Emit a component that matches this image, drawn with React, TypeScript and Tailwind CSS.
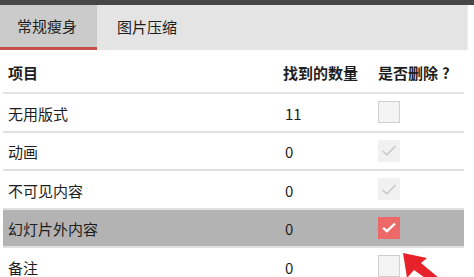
import React from "react";

const font = { fontFamily: '"Noto Sans CJK SC", "Noto Sans", sans-serif' };

function Box({ kind }: { kind: "empty" | "disabled" | "checked" }) {
  if (kind === "empty")
    return <div className="w-[22px] h-[22px] border-[1.5px] border-[#cfcfcf] bg-[#f3f3f3]" />;
  if (kind === "disabled")
    return (
      <div className="w-[22px] h-[22px] bg-[#f1f1f1] flex items-center justify-center">
        <svg width="16" height="13" viewBox="0 0 16 13">
          <path d="M1.5 7 L6 10.8 L14.5 2" fill="none" stroke="#c6c6c6" strokeWidth="1.4" />
        </svg>
      </div>
    );
  return (
    <div className="w-[22px] h-[22px] bg-[#ef6868] flex items-center justify-center">
      <svg width="16" height="13" viewBox="0 0 16 13">
        <path d="M2 6.8 L6 10.2 L14 2.5" fill="none" stroke="#ffffff" strokeWidth="2.4" />
      </svg>
    </div>
  );
}

const rows: { name: string; count: string; kind: "empty" | "disabled" | "checked"; hl?: boolean }[] = [
  { name: "无用版式", count: "11", kind: "empty" },
  { name: "动画", count: "0", kind: "disabled" },
  { name: "不可见内容", count: "0", kind: "disabled" },
  { name: "幻灯片外内容", count: "0", kind: "checked", hl: true },
  { name: "备注", count: "0", kind: "empty" },
];

export default function App() {
  return (
    <div className="relative w-[474px] h-[277px] overflow-hidden bg-white text-[#1e1e1e]" style={font}>
      <div className="h-[5px] bg-[#464646]" />
      <div className="flex h-[45px] w-[468px] bg-[#e4e4e4] border-r border-[#eeeeee]">
        <div className="w-[97px] flex flex-col bg-[#cbcbcb]">
          <div className="flex-1 flex items-center pl-[17px] text-[15px]">常规瘦身</div>
          <div className="h-[3px] bg-[#c94f4f]" />
        </div>
        <div className="flex items-center pl-[20px] text-[15px]">图片压缩</div>
      </div>
      <div className="mt-[5px] w-[464px] pl-[3px]">
        <div className="flex items-center h-[39px] border-b-2 border-[#e3e3e3] text-[15px] font-bold">
          <div className="w-[280px] pl-[5px]">项目</div>
          <div className="w-[95px]">找到的数量</div>
          <div>
            是否删除<span className="ml-[4px]">?</span>
          </div>
        </div>
        {rows.map((r) => (
          <div
            key={r.name}
            className={`flex items-center h-[38.5px] border-b-2 border-[#e0e0e0] text-[15px] ${r.hl ? "bg-[#b3b3b3]" : ""}`}
          >
            <div className="w-[280px] pl-[5px] pt-[3px]">{r.name}</div>
            <div className="w-[95px] pl-[2px] pt-[3px]">{r.count}</div>
            <div>
              <Box kind={r.kind} />
            </div>
          </div>
        ))}
      </div>
      <svg className="absolute left-[396px] top-[248px]" width="70" height="40" viewBox="0 0 70 40">
        <polygon points="7,5 31,10 25,15 55,40 43,40 18,22 11,30" fill="#e8222a" />
      </svg>
    </div>
  );
}
